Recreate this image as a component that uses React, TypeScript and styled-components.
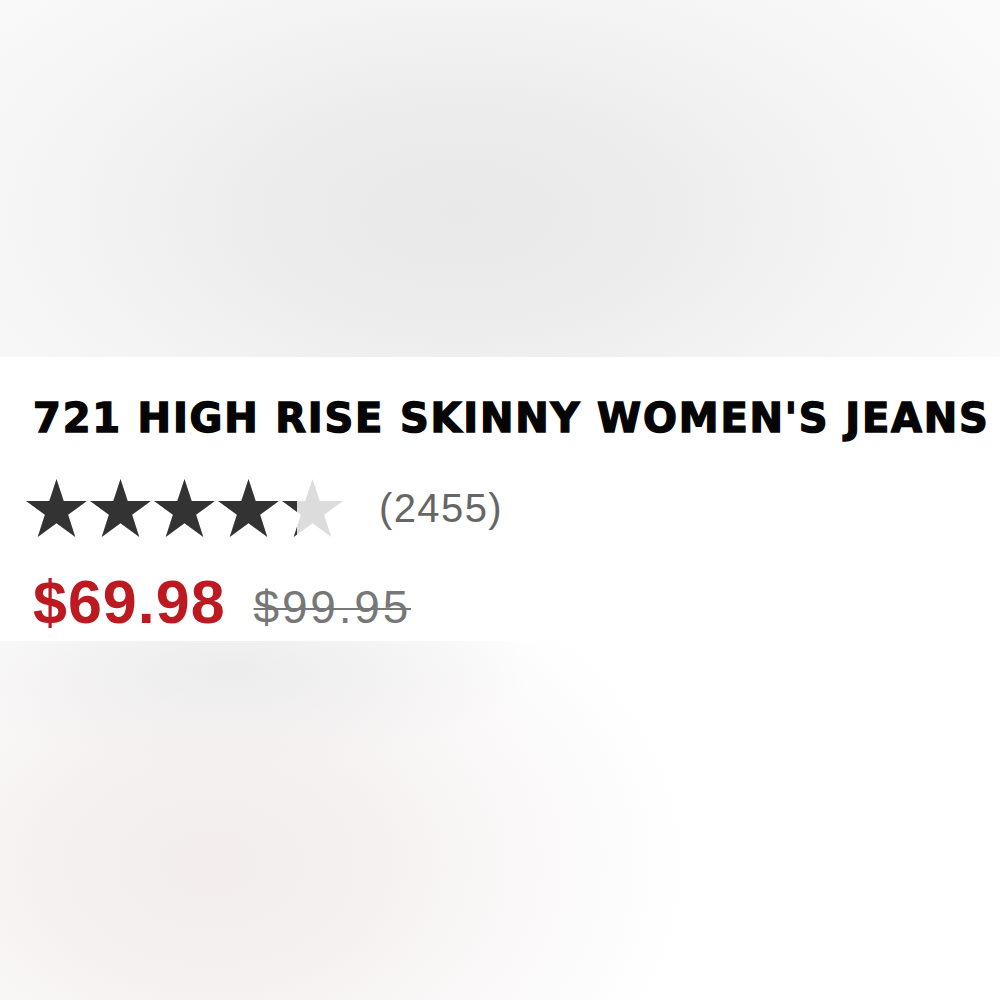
import React from 'react'
import styled, { createGlobalStyle } from 'styled-components'

const GlobalStyle = createGlobalStyle`
  html, body {
    margin: 0;
    padding: 0;
    background: #ffffff;
  }
  body {
    font-family: 'Liberation Sans', Arial, sans-serif;
  }
`

const Page = styled.div`
  width: 1000px;
  height: 1000px;
  display: flex;
  flex-direction: column;
  overflow: hidden;
`

// soft grey wash above the product block
const TopBlur = styled.div`
  height: 357px;
  flex: none;
  background: radial-gradient(
    ellipse 62% 95% at 46% 60%,
    #e9e9e9 0%,
    #ececec 30%,
    #f3f3f3 60%,
    #fafafa 100%
  );
`

// pinkish wash below it, fading out to the right
const BottomBlur = styled.div`
  flex: 1;
  background:
    radial-gradient(ellipse 30% 28% at 23% 8%, rgba(236, 236, 236, 0.9) 0%, rgba(240, 240, 240, 0) 100%),
    radial-gradient(ellipse 48% 95% at 21% 62%, #f3eded 0%, #f5f1f1 35%, #faf8f8 65%, #ffffff 100%);
`

const Card = styled.div`
  height: 284px;
  flex: none;
  background: #ffffff;
  box-sizing: border-box;
  padding: 37px 0 0 33px;
  display: flex;
  flex-direction: column;
`

const Title = styled.h1`
  margin: 0;
  font-family: 'DejaVu Sans', 'Liberation Sans', sans-serif;
  font-weight: 700;
  font-size: 40px;
  line-height: 48px;
  letter-spacing: 1.8px;
  color: #050505;
  -webkit-text-stroke: 1.4px #050505;
  white-space: nowrap;
`

const RatingRow = styled.div`
  display: flex;
  align-items: center;
  margin-top: 37px;
`

const Stars = styled.div`
  display: flex;
  gap: 3px;
  margin-left: -7px;
`

const StarBox = styled.div`
  position: relative;
  width: 61px;
  height: 58px;
`

const StarClip = styled.div`
  position: absolute;
  inset: 0 auto 0 0;
  overflow: hidden;
`

const Count = styled.span`
  margin-left: 36px;
  font-size: 40px;
  color: #666666;
  letter-spacing: 1.4px;
`

const PriceRow = styled.div`
  display: flex;
  align-items: baseline;
  gap: 28px;
  margin-top: 32px;
`

const SalePrice = styled.span`
  font-size: 61px;
  font-weight: 700;
  color: #bd1921;
  line-height: 66px;
  letter-spacing: 1px;
`

const ListPrice = styled.span`
  font-size: 46px;
  color: #777777;
  letter-spacing: 2.8px;
  text-decoration: line-through;
  text-decoration-thickness: 2px;
`

const STAR_POINTS =
  '30.5,0 37.7,22.1 60.9,22.1 42.1,35.8 49.3,57.9 30.5,44.2 11.7,57.9 18.9,35.8 0.1,22.1 23.3,22.1'

const StarShape = ({ color }: { color: string }) => (
  <svg width="61" height="58" viewBox="0 0 61 58">
    <polygon points={STAR_POINTS} fill={color} />
  </svg>
)

const Star = ({ fill }: { fill: number }) => (
  <StarBox>
    <StarShape color="#dcdcdc" />
    {fill > 0 && (
      <StarClip style={{ width: `${fill * 100}%` }}>
        <StarShape color="#333333" />
      </StarClip>
    )}
  </StarBox>
)

const Rating = ({ value }: { value: number }) => (
  <Stars>
    {[0, 1, 2, 3, 4].map((i) => (
      <Star key={i} fill={Math.max(0, Math.min(1, value - i))} />
    ))}
  </Stars>
)

export default function App() {
  return (
    <Page>
      <GlobalStyle />
      <TopBlur />
      <Card>
        <Title>721 HIGH RISE SKINNY WOMEN'S JEANS</Title>
        <RatingRow>
          <Rating value={4.25} />
          <Count>(2455)</Count>
        </RatingRow>
        <PriceRow>
          <SalePrice>$69.98</SalePrice>
          <ListPrice>$99.95</ListPrice>
        </PriceRow>
      </Card>
      <BottomBlur />
    </Page>
  )
}
